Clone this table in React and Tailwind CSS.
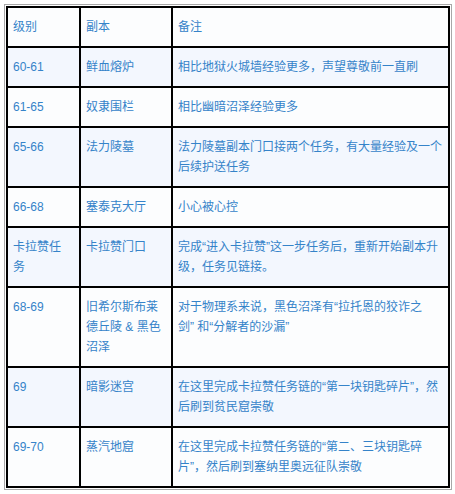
import React from 'react';

const rows = [
  { lv: ['60-61'], dg: ['鲜血熔炉'], note: ['相比地狱火城墙经验更多，声望尊敬前一直刷'] },
  { lv: ['61-65'], dg: ['奴隶围栏'], note: ['相比幽暗沼泽经验更多'] },
  { lv: ['65-66'], dg: ['法力陵墓'], note: ['法力陵墓副本门口接两个任务，有大量经验及一个', '后续护送任务'] },
  { lv: ['66-68'], dg: ['塞泰克大厅'], note: ['小心被心控'] },
  { lv: ['卡拉赞任', '务'], dg: ['卡拉赞门口'], note: ['完成“进入卡拉赞”这一步任务后，重新开始副本升', '级，任务见链接。'] },
  { lv: ['68-69'], dg: ['旧希尔斯布莱', '德丘陵 & 黑色', '沼泽'], note: ['对于物理系来说，黑色沼泽有“拉托恩的狡诈之', '剑” 和“分解者的沙漏”'] },
  { lv: ['69'], dg: ['暗影迷宫'], note: ['在这里完成卡拉赞任务链的“第一块钥匙碎片”，然', '后刷到贫民窟崇敬'] },
  { lv: ['69-70'], dg: ['蒸汽地窟'], note: ['在这里完成卡拉赞任务链的“第二、三块钥匙碎', '片”，然后刷到塞纳里奥远征队崇敬'] },
];

function Lines({ items }) {
  return items.map((t, i) => (
    <div key={i} className="whitespace-nowrap">{t}</div>
  ));
}

export default function App() {
  const cell = 'border-2 border-black px-[5px] py-[9px] align-top text-left font-normal';
  return (
    <div className="w-[455px] h-[494px] bg-white pt-1 pl-1">
      <div className="w-[448px] border border-[#a8a8a8] p-px">
        <table
          className="w-[444px] border-collapse text-[12px] leading-[20px] text-[#3583c9]"
          style={{ fontFamily: '"Liberation Sans", "Noto Sans CJK SC", sans-serif' }}
        >
          <colgroup>
            <col className="w-[73px]" />
            <col className="w-[92px]" />
            <col />
          </colgroup>
          <thead>
            <tr className="bg-[#fcfdfe]">
              <th className={cell}>级别</th>
              <th className={cell}>副本</th>
              <th className={cell}>备注</th>
            </tr>
          </thead>
          <tbody>
            {rows.map((r, i) => (
              <tr key={i} className={i % 2 === 0 ? 'bg-[#f3f7fe]' : 'bg-[#fcfdfe]'}>
                <td className={cell}><Lines items={r.lv} /></td>
                <td className={cell}><Lines items={r.dg} /></td>
                <td className={cell}><Lines items={r.note} /></td>
              </tr>
            ))}
          </tbody>
        </table>
      </div>
    </div>
  );
}
